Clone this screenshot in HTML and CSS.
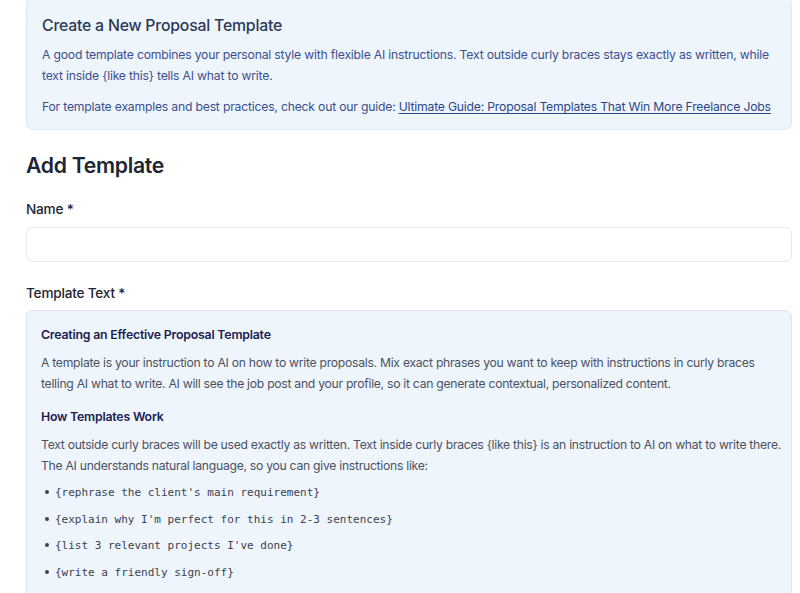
FILE: index.html
```html
<!DOCTYPE html>
<html lang="en">
<head>
<meta charset="utf-8">
<title>Add Template</title>
<link rel="stylesheet" href="styles.css">
</head>
<body>
<div class="page">
  <section class="info">
    <h2 class="info-title">Create a New Proposal Template</h2>
    <p class="info-text">A good template combines your personal style with flexible AI instructions. Text outside curly braces stays exactly as written, while text inside {like this} tells AI what to write.</p>
    <p class="info-text info-link-row">For template examples and best practices, check out our guide: <a href="#" class="info-link">Ultimate Guide: Proposal Templates That Win More Freelance Jobs</a></p>
  </section>

  <h1 class="page-title">Add Template</h1>

  <form class="form">
    <label class="field-label" for="name">Name *</label>
    <input class="text-input" id="name" type="text">

    <label class="field-label label-gap">Template Text *</label>
    <div class="template-box">
      <h3 class="tb-title">Creating an Effective Proposal Template</h3>
      <p class="tb-text">A template is your instruction to AI on how to write proposals. Mix exact phrases you want to keep with instructions in curly braces telling AI what to write. AI will see the job post and your profile, so it can generate contextual, personalized content.</p>
      <h3 class="tb-title tb-sub">How Templates Work</h3>
      <p class="tb-text">Text outside curly braces will be used exactly as written. Text inside curly braces {like this} is an instruction to AI on what to write there. The AI understands natural language, so you can give instructions like:</p>
      <ul class="tb-list">
        <li><code>{rephrase the client's main requirement}</code></li>
        <li><code>{explain why I'm perfect for this in 2-3 sentences}</code></li>
        <li><code>{list 3 relevant projects I've done}</code></li>
        <li><code>{write a friendly sign-off}</code></li>
      </ul>
    </div>
  </form>
</div>
</body>
</html>
```

FILE: styles.css
```css
* { box-sizing: border-box; }
html, body { margin: 0; padding: 0; background: #ffffff; }
body {
  font-family: Inter, "Noto Sans", sans-serif;
  color: #1f2937;
  overflow: hidden;
  height: 593px;
}
.page {
  padding: 0 8px 0 26px;
}
.info {
  margin-top: -3px;
  background: #eff5fd;
  border: 1px solid #dde8f6;
  border-radius: 7px;
  padding: 16px 12px 12px 15px;
}
.info-title {
  margin: 0 0 6px 0;
  font-size: 15.8px;
  line-height: 24px;
  font-weight: 500;
  color: #2b3955;
  letter-spacing: -0.2px;
}
.info-text {
  margin: 0;
  font-size: 12.2px;
  line-height: 21px;
  color: #3a4f8e;
  letter-spacing: -0.2px;
}
.info-link-row { margin-top: 10px; }
.info-link {
  color: #2a4687;
  text-decoration: underline;
  text-underline-offset: 2px;
}
.page-title {
  margin: 20px 0 0 0;
  font-size: 21.2px;
  line-height: 30px;
  font-weight: 600;
  color: #1e2533;
  letter-spacing: -0.3px;
}
.form {
  display: flex;
  flex-direction: column;
}
.field-label {
  margin-top: 19px;
  font-size: 13.6px;
  line-height: 20px;
  font-weight: 500;
  color: #1f2430;
  letter-spacing: -0.2px;
}
.label-gap { margin-top: 21px; }
.text-input {
  margin-top: 8px;
  height: 35px;
  border: 1px solid #e6e9ee;
  border-radius: 6px;
  background: #fff;
  font: inherit;
  padding: 0 12px;
  outline: none;
}
.template-box {
  margin-top: 7px;
  background: #eff5fd;
  border: 1px solid #dbe4f0;
  border-radius: 6px;
  padding: 14px 4px 20px 14px;
  min-height: 300px;
}
.tb-title {
  margin: 0;
  font-size: 12.3px;
  line-height: 20px;
  font-weight: 600;
  color: #1b2152;
  letter-spacing: -0.2px;
}
.tb-sub { margin-top: 13.5px; }
.tb-text {
  margin: 6.5px 0 0 0;
  font-size: 12.2px;
  line-height: 21px;
  color: #4a5261;
  letter-spacing: -0.28px;
}
.tb-list {
  list-style: none;
  margin: 6.5px 0 0 0;
  padding: 0;
}
.tb-list li {
  position: relative;
  padding-left: 14px;
  font-size: 11px;
  line-height: 20px;
  margin-bottom: 5.7px;
}
.tb-list li::before {
  content: "";
  position: absolute;
  left: 4px;
  top: 8px;
  width: 4px;
  height: 4px;
  border-radius: 50%;
  background: #3b4250;
}
.tb-list code {
  font-family: "DejaVu Sans Mono", "Liberation Mono", monospace;
  font-size: 11px;
  line-height: 20px;
  color: #3b4250;
}
```
